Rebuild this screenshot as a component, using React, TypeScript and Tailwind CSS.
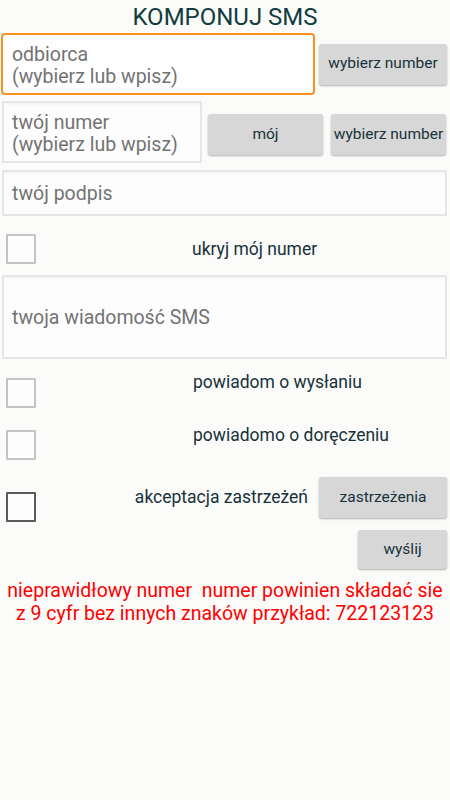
import React from "react";

const font = { fontFamily: "Roboto, 'Noto Sans', sans-serif" };

function Btn({ children, className = "" }: { children: React.ReactNode; className?: string }) {
  return (
    <div
      className={
        "flex items-center justify-center rounded-[3px] bg-[#d7d7d7] text-[15.5px] text-[#17323a] shadow-[0_1px_2px_rgba(0,0,0,0.3)] " +
        className
      }
    >
      {children}
    </div>
  );
}

function Box({ dark = false, className = "" }: { dark?: boolean; className?: string }) {
  return (
    <div
      className={
        "h-[30px] w-[30px] shrink-0 rounded-[1px] border-2 bg-[#fdfdfd] " +
        (dark ? "border-[#5a5a5a] " : "border-[#c4c4c4] ") +
        className
      }
    />
  );
}

export default function App() {
  return (
    <div className="h-[800px] w-[450px] overflow-hidden bg-[#fbfbf9]" style={font}>
      <div className="flex h-[33px] items-center justify-center pt-[1px] text-[24px] text-[#113c40]">
        KOMPONUJ SMS
      </div>

      <div className="flex h-[62px] items-center">
        <div className="ml-[1px] flex h-[62px] w-[314px] flex-col justify-center rounded-[4px] border-[2.5px] border-[#f7931e] bg-[#fefefe] pl-[9px] pt-[3px] text-[19.5px] leading-[22px] text-[#737373]">
          <div>odbiorca</div>
          <div>(wybierz lub wpisz)</div>
        </div>
        <Btn className="ml-[4px] h-[41px] w-[128px]">wybierz number</Btn>
      </div>

      <div className="mt-[6px] flex h-[62px] items-start">
        <div className="ml-[2px] flex h-[62px] w-[200px] flex-col justify-center border-2 border-[#e6e6e6] bg-[#fdfdfd] pl-[8px] pt-[4px] text-[19.5px] leading-[22px] text-[#737373] shadow-[inset_0_2px_2px_rgba(0,0,0,0.03)]">
          <div>twój numer</div>
          <div>(wybierz lub wpisz)</div>
        </div>
        <Btn className="ml-[6px] mt-[13px] h-[41px] w-[115px]">mój</Btn>
        <Btn className="ml-[8px] mt-[13px] h-[41px] w-[115px]">wybierz number</Btn>
      </div>

      <div className="ml-[2px] mt-[7px] flex h-[46px] w-[445px] items-center border-2 border-[#e6e6e6] bg-[#fdfdfd] pl-[8px] pt-[1px] text-[19.5px] text-[#737373] shadow-[inset_0_2px_2px_rgba(0,0,0,0.03)]">
        twój podpis
      </div>

      <div className="mt-[17px] flex h-[31px] items-center">
        <Box className="ml-[6px]" />
        <div className="ml-[156px] pt-[1px] text-[17.5px] text-[#17323a]">ukryj mój numer</div>
      </div>

      <div className="ml-[2px] mt-[11px] flex h-[84px] w-[445px] items-center border-2 border-[#e6e6e6] bg-[#fdfdfd] pl-[8px] pt-[2px] text-[19.5px] text-[#737373] shadow-[inset_0_2px_2px_rgba(0,0,0,0.03)]">
        twoja wiadomość SMS
      </div>

      <div className="mt-[13px] flex items-start">
        <Box className="ml-[6px] mt-[6px]" />
        <div className="ml-[157px] text-[17.5px] leading-[20px] text-[#17323a]">powiadom o wysłaniu</div>
      </div>

      <div className="mt-[17px] flex items-start">
        <Box className="ml-[6px] mt-[5px]" />
        <div className="ml-[157px] text-[17.5px] leading-[20px] text-[#17323a]">powiadomo o doręczeniu</div>
      </div>

      <div className="mt-[17px] flex items-start">
        <Box dark className="ml-[6px] mt-[15px]" />
        <div className="flex h-[41px] flex-1 items-center justify-end">
          <div className="text-[17.5px] text-[#17323a]">akceptacja zastrzeżeń</div>
          <Btn className="ml-[11px] mr-[3px] h-[41px] w-[128px]">zastrzeżenia</Btn>
        </div>
      </div>

      <div className="mt-[8px] flex justify-end">
        <Btn className="mr-[3px] h-[39px] w-[89px]">wyślij</Btn>
      </div>

      <div className="mt-[10px] text-center text-[19.5px] leading-[23px] text-[#ff0000]">
        <div>nieprawidłowy numer&nbsp; numer powinien składać sie</div>
        <div>z 9 cyfr bez innych znaków przykład: 722123123</div>
      </div>
    </div>
  );
}
